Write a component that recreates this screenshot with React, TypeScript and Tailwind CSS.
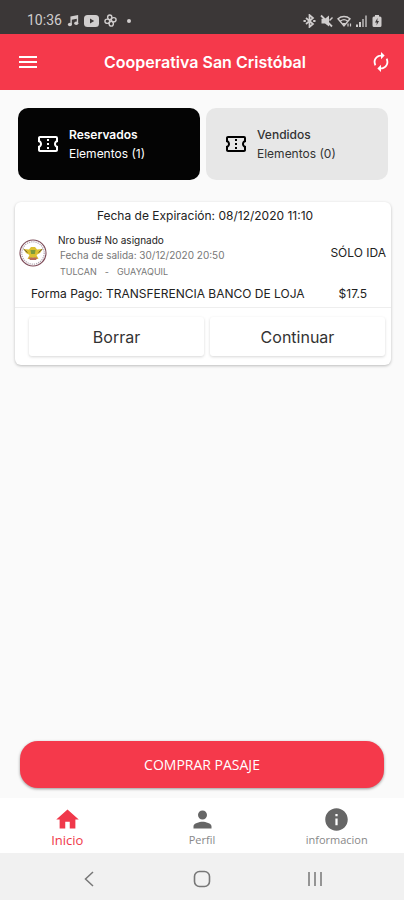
import type { ReactNode } from "react";
import {
  MdAutorenew,
  MdHome,
  MdInfo,
  MdMenu,
  MdOutlineConfirmationNumber,
  MdPerson,
} from "react-icons/md";

function StatusBar() {
  return (
    <div className="flex h-[34px] items-end justify-between bg-[#3b3737] pr-[22px] pb-[6px] pl-[27px] text-[#d0cdcd]">
      <div className="flex items-center gap-[5px]">
        <span className="font-['Roboto',sans-serif] text-[14px] leading-[15px]">10:36</span>
        <svg viewBox="0 0 14 14" className="h-[13px] w-[12px]" fill="currentColor" aria-hidden="true">
          <path d="M4 2.2 13 .6v9.6h-1.6V5L5.600 6.100V12H4z" />
          <ellipse cx="3.400" cy="11.600" rx="2.400" ry="2" />
          <ellipse cx="10.800" cy="10.200" rx="2.400" ry="2" />
        </svg>
        <svg viewBox="0 0 15 12" className="h-3 w-[15px]" aria-hidden="true">
          <rect width="15" height="12" rx="3.500" fill="currentColor" />
          <path d="M6 3.500 10.200 6 6 8.500z" fill="#3b3737" />
        </svg>
        <svg viewBox="0 0 14 14" className="size-[13px]" fill="none" stroke="currentColor" strokeWidth="1.500" aria-hidden="true">
          <ellipse cx="6.200" cy="3.600" rx="2.300" ry="2.600" />
          <ellipse cx="10.400" cy="6.200" rx="2.600" ry="2.300" />
          <ellipse cx="7.800" cy="10.400" rx="2.300" ry="2.600" />
          <ellipse cx="3.600" cy="7.800" rx="2.600" ry="2.300" />
        </svg>
        <span className="ml-[5px] size-1 rounded-full bg-[#d0cdcd]" />
      </div>
      <div className="flex items-center gap-1">
        <svg viewBox="0 0 13 14" className="h-[14px] w-[13px]" fill="none" stroke="currentColor" strokeWidth="1.700" aria-hidden="true">
          <path d="M3 4l7 6-3.500 3V1L10 4l-7 6" />
          <path d="M.5 7h2.300M10.200 7h2.300" strokeWidth="2" />
        </svg>
        <svg viewBox="0 0 13 14" className="h-[14px] w-[13px]" fill="currentColor" aria-hidden="true">
          <path d="M1.500 4.800H5L9 1.500v11L5 9.500H1.500z" />
          <path d="M1 1.500 12 12.500" stroke="currentColor" strokeWidth="1.800" />
          <path d="M9.500 6.500l3-3" stroke="currentColor" strokeWidth="1.500" />
        </svg>
        <svg viewBox="0 0 15 14" className="h-[14px] w-[15px]" fill="none" stroke="currentColor" strokeWidth="1.400" aria-hidden="true">
          <path d="M1 4.800c3.500-3 8.500-3 12 0L7 12zM3.500 7c2-1.600 5-1.600 7 0" />
          <path d="M5 9h4l-2 3z" fill="currentColor" stroke="none" />
          <path d="M11 9.500v3M13.500 9.500v3" strokeWidth="1.200" />
        </svg>
        <svg viewBox="0 0 12 14" className="h-[14px] w-[12px]" fill="currentColor" aria-hidden="true">
          <path d="M0 10.500h2V13H0zM3 8h2v5H3z" />
          <path d="M6 5h2v8H6zM9 1.500h2V13H9z" opacity=".65" />
        </svg>
        <svg viewBox="0 0 10 14" className="h-[14px] w-[10px]" aria-hidden="true">
          <path d="M3 1h4v1.500h1A1.500 1.500 0 0 1 9.500 4v7.500A1.500 1.500 0 0 1 8 13H2a1.500 1.500 0 0 1-1.500-1.500V4A1.500 1.500 0 0 1 2 2.500h1z" fill="currentColor" />
          <path d="M5.500 4 3 8.500h1.800L4.500 11.500 7 7H5.300z" fill="#3b3737" />
        </svg>
      </div>
    </div>
  );
}

function Header() {
  return (
    <header className="flex h-14 items-center justify-between bg-[#f5394b] pr-3 pl-4 text-white">
      <button type="button" aria-label="Menú" className="flex">
        <MdMenu className="size-6" />
      </button>
      <h1 className="text-[16px] leading-6 font-semibold">Cooperativa San Cristóbal</h1>
      <button type="button" aria-label="Actualizar" className="flex">
        <MdAutorenew className="size-[22px]" />
      </button>
    </header>
  );
}

function CountTab({ title, count, active }: { title: string; count: number; active?: boolean }) {
  const look = active
    ? "bg-[#040404] text-white"
    : "bg-[#e7e7e7] text-[#333] [&>svg]:text-black";
  return (
    <button
      type="button"
      aria-pressed={!!active}
      className={`flex h-[72px] flex-1 items-center gap-[9px] rounded-[10px] pl-[18px] text-left ${look}`}
    >
      <MdOutlineConfirmationNumber className="size-6" />
      <span className="text-[12px] leading-[19px]">
        <span className={active ? "block font-semibold" : "block font-medium"}>{title}</span>
        <span className="block">Elementos ({count})</span>
      </span>
    </button>
  );
}

function CompanySeal() {
  return (
    <svg viewBox="0 0 28 28" className="size-7 shrink-0" aria-hidden="true">
      <circle cx="14" cy="14" r="13" fill="#fff" stroke="#7d4a57" strokeWidth="1.100" />
      <circle cx="14" cy="14" r="11.200" fill="none" stroke="#b5a9b4" strokeWidth="1.300" strokeDasharray="1.200 1" />
      <path d="M4.500 10 10 10.500l2-2.500h4l2 2.500 5.500-.5L21 14l-3.500 2 2 4h-3.500L14 18.500 12 20H8.500l2-4L7 14z" fill="#dcc02f" />
      <path d="M11.500 11h5l-.6 4h-3.800z" fill="#7c9a3c" />
      <path d="M4.500 10l4 3.500M23.500 10l-4 3.500" stroke="#6b5a3c" strokeWidth="1" />
      <path d="M9.500 18.500h9l-1.500 2.500h-6z" fill="#b86a5a" />
    </svg>
  );
}

function TicketAction({ children }: { children: ReactNode }) {
  return (
    <button
      type="button"
      className="h-[39px] flex-1 rounded-[3px] bg-white text-[16px] text-[#333] shadow-[0_1px_3px_rgba(0,0,0,0.16)]"
    >
      {children}
    </button>
  );
}

function Ticket() {
  return (
    <article className="mt-[22px] mr-[13px] ml-[15px] rounded-[6px] bg-white text-[#222] shadow-[0_1px_3px_rgba(0,0,0,0.25)]">
      <p className="pl-1 text-center text-[12px] leading-[27px]">Fecha de Expiración: 08/12/2020 11:10</p>
      <div className="flex items-start pt-1 pr-[5px] pl-1">
        <div className="flex h-10 items-center">
          <CompanySeal />
        </div>
        <div className="ml-[11px] flex-1">
          <p className="text-[10px] leading-[15px]">Nro bus# No asignado</p>
          <p className="pl-[2px] text-[10px] leading-[15px] text-[#777]">Fecha de salida: 30/12/2020 20:50</p>
          <p className="flex gap-2 pl-[2px] text-[9px] leading-[17px] text-[#777]">
            <span>TULCAN</span>
            <span>-</span>
            <span>GUAYAQUIL</span>
          </p>
        </div>
        <p className="text-[12px] leading-10">SÓLO IDA</p>
      </div>
      <div className="flex justify-between pt-[5px] pr-6 pb-[5px] pl-4 text-[12px] leading-[17px]">
        <p>Forma Pago: TRANSFERENCIA BANCO DE LOJA</p>
        <p>$17.5</p>
      </div>
      <div className="flex gap-[6px] border-t border-[#eee] pt-[9px] pr-[6px] pb-[9px] pl-[14px]">
        <TicketAction>Borrar</TicketAction>
        <TicketAction>Continuar</TicketAction>
      </div>
    </article>
  );
}

function NavLink({ label, icon, active }: { label: string; icon: ReactNode; active?: boolean }) {
  return (
    <a
      href="#"
      aria-current={active ? "page" : undefined}
      className={`flex flex-1 flex-col items-center pt-2 ${active ? "text-[#f0384a]" : "text-[#666]"}`}
    >
      {icon}
      <span className={`leading-[14px] ${active ? "text-[13px]" : "text-[11px] text-[#888]"}`}>{label}</span>
    </a>
  );
}

function SystemNav() {
  return (
    <div className="grid h-[47px] grid-cols-3 items-center bg-[#f1f1f1] px-8 pt-1 text-[#777]">
      <button type="button" aria-label="Atrás" className="flex justify-center">
        <svg viewBox="0 0 10 16" className="h-4 w-[10px]" fill="none" stroke="currentColor" strokeWidth="1.500">
          <path d="M9 1 1.500 8 9 15" />
        </svg>
      </button>
      <button type="button" aria-label="Pantalla de inicio" className="flex justify-center">
        <svg viewBox="0 0 18 18" className="size-[18px]" fill="none" stroke="currentColor" strokeWidth="1.600">
          <rect x="1.500" y="1.500" width="15" height="15" rx="5" />
        </svg>
      </button>
      <button type="button" aria-label="Recientes" className="flex justify-center">
        <svg viewBox="0 0 16 16" className="size-4" fill="none" stroke="currentColor" strokeWidth="1.500">
          <path d="M2 1v14M8 1v14M14 1v14" />
        </svg>
      </button>
    </div>
  );
}

export default function App() {
  return (
    <div className="flex min-h-screen flex-col bg-[#fafafa] font-['Inter',sans-serif]">
      <StatusBar />
      <Header />
      <main className="flex flex-1 flex-col">
        <div className="flex gap-[6px] pt-[18px] pr-4 pl-[18px]">
          <CountTab title="Reservados" count={1} active />
          <CountTab title="Vendidos" count={0} />
        </div>
        <Ticket />
        <button
          type="button"
          className="mx-5 mt-auto mb-[10px] h-[47px] rounded-[18px] bg-[#f5394b] font-['Open_Sans',sans-serif] text-[14px] text-white shadow-[0_1px_3px_rgba(0,0,0,0.4)]"
        >
          COMPRAR PASAJE
        </button>
      </main>
      <nav className="flex h-[55px] bg-white font-['Open_Sans',sans-serif]">
        <NavLink label="Inicio" icon={<MdHome className="size-[27px]" />} active />
        <NavLink label="Perfil" icon={<MdPerson className="size-[27px]" />} />
        <NavLink label="informacion" icon={<MdInfo className="size-[27px]" />} />
      </nav>
      <SystemNav />
    </div>
  );
}
